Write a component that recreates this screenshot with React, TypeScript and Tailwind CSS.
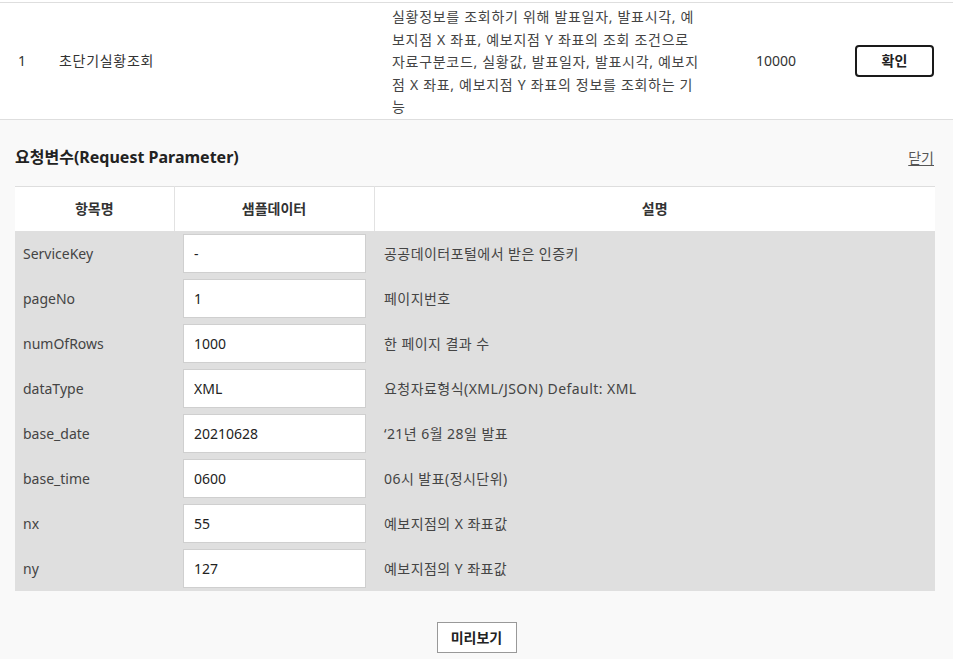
const font = { fontFamily: '"Noto Sans", "Noto Sans CJK KR", sans-serif' }

const params = [
  { name: 'ServiceKey', sample: '-', desc: '공공데이터포털에서 받은 인증키' },
  { name: 'pageNo', sample: '1', desc: '페이지번호' },
  { name: 'numOfRows', sample: '1000', desc: '한 페이지 결과 수' },
  { name: 'dataType', sample: 'XML', desc: '요청자료형식(XML/JSON) Default: XML' },
  { name: 'base_date', sample: '20210628', desc: '‘21년 6월 28일 발표' },
  { name: 'base_time', sample: '0600', desc: '06시 발표(정시단위)' },
  { name: 'nx', sample: '55', desc: '예보지점의 X 좌표값' },
  { name: 'ny', sample: '127', desc: '예보지점의 Y 좌표값' },
]

const descLines = [
  '실황정보를 조회하기 위해 발표일자, 발표시각, 예',
  '보지점 X 좌표, 예보지점 Y 좌표의 조회 조건으로',
  '자료구분코드, 실황값, 발표일자, 발표시각, 예보지',
  '점 X 좌표, 예보지점 Y 좌표의 정보를 조회하는 기',
  '능',
]

export default function App() {
  return (
    <div className="min-h-screen bg-[#f9f9f9] text-[14px] text-[#333]" style={font}>
      <div className="h-[2px] bg-white" />
      <div className="flex items-center border-y border-[#dedede] bg-white pl-[18px]">
        <div className="w-[41px]">1</div>
        <div className="w-[333px] tracking-[0.7px]">초단기실황조회</div>
        <div className="w-[364px] pt-[3px] leading-[22.5px] tracking-[0.7px] text-[#444]">
          {descLines.map((line) => (
            <div key={line}>{line}</div>
          ))}
        </div>
        <div className="w-[99px]">10000</div>
        <button type="button" className="h-[32px] w-[79px] rounded-[4px] border-2 border-[#1a1a1a] bg-white text-[14px] font-bold text-[#222]">
          확인
        </button>
      </div>

      <section className="px-[15px] pb-[7px]">
        <div className="flex items-center justify-between pb-[16px] pt-[25px]">
          <h2 className="text-[16px] font-bold leading-[25px] text-[#222]">요청변수(Request Parameter)</h2>
          <a href="#" className="mr-[4px] text-[14px] text-[#555] underline underline-offset-2">닫기</a>
        </div>

        <table className="w-[920px] table-fixed border-collapse">
          <thead>
            <tr className="h-[45px] border-t border-[#dedede] bg-white text-[14px] font-bold text-[#333]">
              <th className="w-[159px] border-r border-[#e2e2e2]">항목명</th>
              <th className="w-[200px] border-r border-[#e2e2e2]">샘플데이터</th>
              <th>설명</th>
            </tr>
          </thead>
          <tbody className="bg-[#dfdfdf] text-[#444]">
            {params.map((p) => (
              <tr key={p.name} className="h-[45px]">
                <td className="pl-[8px]">{p.name}</td>
                <td className="pl-[9px]">
                  <input
                    readOnly
                    value={p.sample}
                    className="h-[39px] w-[183px] border border-[#cfcfcf] bg-white px-[10px] text-[14px] text-[#222] outline-none"
                    style={font}
                  />
                </td>
                <td className="pl-[10px] tracking-[0.45px]">{p.desc}</td>
              </tr>
            ))}
          </tbody>
        </table>

        <div className="flex justify-center pt-[31px]">
          <button type="button" className="h-[31px] w-[80px] border border-[#999] bg-white text-[14px] font-bold text-[#222]">
            미리보기
          </button>
        </div>
      </section>
    </div>
  )
}
